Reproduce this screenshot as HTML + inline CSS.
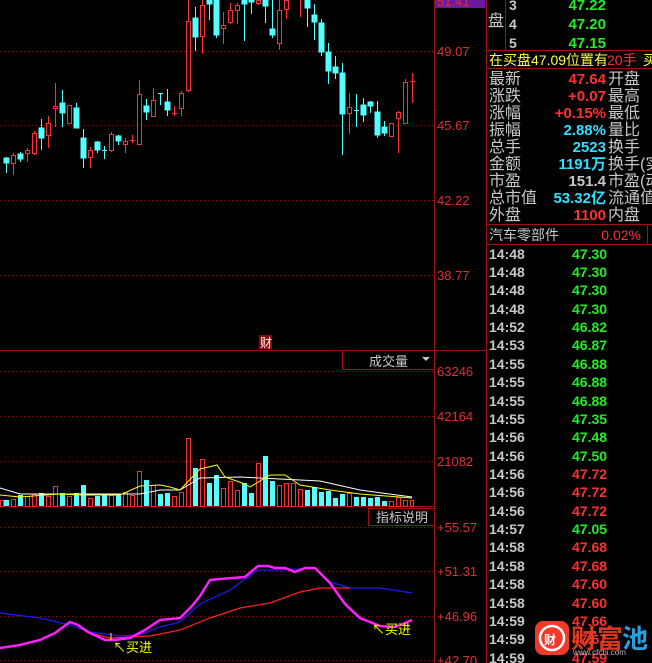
<!DOCTYPE html>
<html><head><meta charset="utf-8"><style>
html,body{margin:0;padding:0;background:#000;width:652px;height:663px;overflow:hidden}
svg{display:block}
text{font-family:"Liberation Sans","Noto Sans CJK SC",sans-serif}
.ax{fill:#e03030;font-size:13px}
.lb{fill:#c8c8c8;font-size:16px}
.v{font-size:15px;font-weight:bold;text-anchor:end}
.t{fill:#c8c8c8;font-size:14px;font-weight:bold}
.p{font-size:14px;font-weight:bold}
</style></head><body>
<svg width="652" height="663" viewBox="0 0 652 663" xmlns="http://www.w3.org/2000/svg">
<rect width="652" height="663" fill="#000"/>
<g stroke="#8a1010" stroke-dasharray="1,3" stroke-width="1">
<line x1="0" y1="51.5" x2="434" y2="51.5"/><line x1="0" y1="125.5" x2="434" y2="125.5"/>
<line x1="0" y1="200.5" x2="434" y2="200.5"/><line x1="0" y1="275.5" x2="434" y2="275.5"/>
<line x1="0" y1="371.5" x2="434" y2="371.5"/><line x1="0" y1="416.5" x2="434" y2="416.5"/>
<line x1="0" y1="461.5" x2="434" y2="461.5"/>
<line x1="0" y1="527.5" x2="434" y2="527.5"/><line x1="0" y1="571.5" x2="434" y2="571.5"/>
<line x1="0" y1="616.5" x2="434" y2="616.5"/><line x1="0" y1="660.5" x2="434" y2="660.5"/>
</g>
<g stroke="#a01010" stroke-width="1">
<line x1="434.5" y1="0" x2="434.5" y2="663"/>
<line x1="0" y1="350.5" x2="487" y2="350.5"/>
<line x1="0" y1="506.5" x2="434" y2="506.5"/>
<line x1="486.5" y1="0" x2="486.5" y2="663"/>
<line x1="505.5" y1="0" x2="505.5" y2="50"/>
<line x1="487" y1="50.5" x2="652" y2="50.5"/>
<line x1="487" y1="68.5" x2="652" y2="68.5"/>
<line x1="487" y1="224.5" x2="652" y2="224.5"/>
<line x1="487" y1="244.5" x2="652" y2="244.5"/>
<line x1="647.5" y1="224" x2="647.5" y2="244"/>
<line x1="434" y1="110.5" x2="437" y2="110.5"/>
</g>
<rect x="435" y="0" width="50" height="8" fill="#6a1aa0"/>
<text x="437" y="6" class="ax" fill="#c070ff">51.41</text>
<text x="437" y="56" class="ax">49.07</text>
<text x="437" y="130" class="ax">45.67</text>
<text x="437" y="205" class="ax">42.22</text>
<text x="437" y="280" class="ax">38.77</text>
<text x="437" y="376" class="ax">63246</text>
<text x="437" y="421" class="ax">42164</text>
<text x="437" y="466" class="ax">21082</text>
<text x="437" y="532" class="ax">+55.57</text>
<text x="437" y="576" class="ax">+51.31</text>
<text x="437" y="621" class="ax">+46.96</text>
<text x="437" y="665" class="ax">+42.70</text>
<rect x="259" y="335" width="13" height="14" fill="#8a0a0a"/>
<text x="260" y="347" fill="#fff" font-size="12">财</text>
<rect x="342.5" y="350.5" width="92" height="19" fill="none" stroke="#a01010"/>
<text x="369" y="366" fill="#c8c8c8" font-size="13">成交量</text>
<polygon points="422,357 430,357 426,361" fill="#c8c8c8"/>
<rect x="368.5" y="508.5" width="66" height="17" fill="none" stroke="#a01010"/>
<text x="376" y="522" fill="#c8c8c8" font-size="13">指标说明</text>
<!-- candles -->
<g stroke-width="1">
<g stroke="#54ffff" fill="#54ffff">
<line x1="6.5" y1="157" x2="6.5" y2="173"/><rect x="4" y="158" width="5" height="5"/>
<line x1="20.5" y1="152" x2="20.5" y2="162"/><rect x="18" y="154" width="5" height="5"/>
<line x1="41.5" y1="119" x2="41.5" y2="150"/><rect x="39" y="128" width="5" height="10"/>
<line x1="62.5" y1="90" x2="62.5" y2="127"/><rect x="60" y="103" width="5" height="10"/>
<line x1="76.5" y1="103" x2="76.5" y2="128"/><rect x="74" y="108" width="5" height="20"/>
<line x1="83.5" y1="129" x2="83.5" y2="168"/><rect x="81" y="138" width="5" height="20"/>
<line x1="97.5" y1="141" x2="97.5" y2="153"/><rect x="95" y="142" width="5" height="8"/>
<line x1="104.5" y1="146" x2="104.5" y2="159"/><line x1="102" y1="150.5" x2="107" y2="150.5"/>
<line x1="118.5" y1="135" x2="118.5" y2="145"/><rect x="116" y="136" width="5" height="5"/>
<line x1="146.5" y1="99" x2="146.5" y2="120"/><rect x="144" y="106" width="5" height="6"/>
<line x1="160.5" y1="93" x2="160.5" y2="105"/><line x1="158" y1="93.5" x2="163" y2="93.5"/>
<line x1="167.5" y1="89" x2="167.5" y2="116"/><rect x="165" y="102" width="5" height="8"/>
<line x1="195.5" y1="7" x2="195.5" y2="51"/><rect x="193" y="18" width="5" height="19"/>
<line x1="209.5" y1="0" x2="209.5" y2="20"/><rect x="207" y="0" width="5" height="4"/>
<line x1="216.5" y1="0" x2="216.5" y2="38"/><rect x="214" y="0" width="5" height="35"/>
<line x1="244.5" y1="0" x2="244.5" y2="41"/><rect x="242" y="0" width="5" height="4"/>
<line x1="251.5" y1="0" x2="251.5" y2="14"/><rect x="249" y="0" width="5" height="2"/>
<line x1="265.5" y1="0" x2="265.5" y2="23"/><rect x="263" y="0" width="5" height="6"/>
<line x1="272.5" y1="0" x2="272.5" y2="38"/><rect x="270" y="29" width="5" height="6"/>
<line x1="307.5" y1="0" x2="307.5" y2="27"/><rect x="305" y="0" width="5" height="8"/>
<line x1="314.5" y1="4" x2="314.5" y2="40"/><rect x="312" y="15" width="5" height="7"/>
<line x1="321.5" y1="19" x2="321.5" y2="56"/><rect x="319" y="23" width="5" height="29"/>
<line x1="328.5" y1="43" x2="328.5" y2="84"/><rect x="326" y="52" width="5" height="19"/>
<line x1="335.5" y1="56" x2="335.5" y2="79"/><rect x="333" y="67" width="5" height="6"/>
<line x1="342.5" y1="63" x2="342.5" y2="155"/><rect x="340" y="73" width="5" height="41"/>
<line x1="356.5" y1="94" x2="356.5" y2="127"/><line x1="354" y1="110.5" x2="359" y2="110.5"/>
<line x1="363.5" y1="98" x2="363.5" y2="122"/><rect x="361" y="105" width="5" height="10"/>
<line x1="370.5" y1="101" x2="370.5" y2="113"/><rect x="368" y="102" width="5" height="4"/>
<line x1="377.5" y1="101" x2="377.5" y2="138"/><rect x="375" y="112" width="5" height="23"/>
<line x1="384.5" y1="121" x2="384.5" y2="136"/><rect x="382" y="127" width="5" height="6"/>
</g>
<g stroke="#ff3030" fill="#000">
<line x1="13.5" y1="153" x2="13.5" y2="175"/><rect x="11.5" y="155.5" width="4" height="8"/>
<line x1="27.5" y1="148" x2="27.5" y2="162"/><rect x="25.5" y="150.5" width="4" height="3"/>
<line x1="34.5" y1="131" x2="34.5" y2="155"/><rect x="32.5" y="133.5" width="4" height="20"/>
<line x1="48.5" y1="116" x2="48.5" y2="148"/><rect x="46.5" y="123.5" width="4" height="12"/>
<line x1="55.5" y1="83" x2="55.5" y2="127"/><rect x="53.5" y="106.5" width="4" height="2"/>
<rect x="67.5" y="105.5" width="4" height="18"/>
<line x1="90.5" y1="147" x2="90.5" y2="168"/><rect x="88.5" y="150.5" width="4" height="7"/>
<line x1="111.5" y1="132" x2="111.5" y2="152"/><rect x="109.5" y="134.5" width="4" height="16"/>
<line x1="125.5" y1="138" x2="125.5" y2="153"/><rect x="123.5" y="141.5" width="4" height="3"/>
<line x1="132.5" y1="135" x2="132.5" y2="143"/><line x1="130" y1="140.5" x2="135" y2="140.5"/>
<line x1="139.5" y1="80" x2="139.5" y2="145"/><rect x="137.5" y="94.5" width="4" height="50"/>
<line x1="153.5" y1="88" x2="153.5" y2="117"/><rect x="151.5" y="100.5" width="4" height="16"/>
<line x1="174.5" y1="106" x2="174.5" y2="116"/><line x1="172" y1="113.5" x2="177" y2="113.5"/>
<line x1="181.5" y1="91" x2="181.5" y2="116"/><rect x="179.5" y="93.5" width="4" height="15"/>
<line x1="188.5" y1="0" x2="188.5" y2="92"/><rect x="186.5" y="21.5" width="4" height="69"/>
<line x1="202.5" y1="0" x2="202.5" y2="54"/><rect x="200.5" y="5.5" width="4" height="31"/>
<line x1="223.5" y1="12" x2="223.5" y2="44"/><rect x="221.5" y="25.5" width="4" height="3"/>
<line x1="230.5" y1="3" x2="230.5" y2="24"/><rect x="228.5" y="10.5" width="4" height="12"/>
<line x1="237.5" y1="3" x2="237.5" y2="24"/><rect x="235.5" y="5.5" width="4" height="5"/>
<line x1="258.5" y1="0" x2="258.5" y2="5"/><rect x="256.5" y="0.5" width="4" height="3"/>
<line x1="279.5" y1="0" x2="279.5" y2="50"/><rect x="277.5" y="10.5" width="4" height="33"/>
<line x1="286.5" y1="0" x2="286.5" y2="19"/><rect x="284.5" y="0.5" width="4" height="9"/>
<line x1="300.5" y1="0" x2="300.5" y2="17"/>
<line x1="349.5" y1="93" x2="349.5" y2="134"/><rect x="347.5" y="107.5" width="4" height="6"/>
<rect x="389.5" y="123.5" width="4" height="13"/>
<line x1="398.5" y1="111" x2="398.5" y2="153"/><rect x="396.5" y="112.5" width="4" height="6"/>
<line x1="405.5" y1="79" x2="405.5" y2="124"/><rect x="403.5" y="82.5" width="4" height="41"/>
<line x1="412.5" y1="73" x2="412.5" y2="103"/><line x1="410" y1="81.5" x2="415" y2="81.5"/>
</g>
</g>
<!-- volume -->
<g fill="#54ffff">
<rect x="4" y="500" width="5" height="6"/><rect x="18" y="495" width="5" height="11"/><rect x="39" y="493" width="5" height="13"/>
<rect x="60" y="493" width="5" height="13"/><rect x="74" y="493" width="5" height="13"/><rect x="81" y="485" width="5" height="21"/>
<rect x="95" y="496" width="5" height="10"/><rect x="102" y="495" width="5" height="11"/><rect x="116" y="495" width="5" height="11"/>
<rect x="144" y="480" width="5" height="26"/><rect x="158" y="494" width="5" height="12"/><rect x="165" y="493" width="5" height="13"/>
<rect x="193" y="468" width="5" height="38"/><rect x="207" y="483" width="5" height="23"/><rect x="214" y="475" width="5" height="31"/>
<rect x="242" y="483" width="5" height="23"/><rect x="249" y="493" width="5" height="13"/><rect x="263" y="456" width="5" height="50"/>
<rect x="270" y="481" width="5" height="25"/><rect x="305" y="490" width="5" height="16"/><rect x="312" y="487" width="5" height="19"/>
<rect x="319" y="492" width="5" height="14"/><rect x="326" y="491" width="5" height="15"/><rect x="333" y="498" width="5" height="8"/>
<rect x="340" y="494" width="5" height="12"/><rect x="354" y="497" width="5" height="9"/><rect x="361" y="497" width="5" height="9"/>
<rect x="368" y="498" width="5" height="8"/><rect x="375" y="497" width="5" height="9"/><rect x="382" y="501" width="5" height="5"/>
</g>
<g fill="none" stroke="#ff3030">
<rect x="0.5" y="500.5" width="3" height="6"/><rect x="11.5" y="499.5" width="4" height="7"/><rect x="25.5" y="496.5" width="4" height="10"/>
<rect x="32.5" y="494.5" width="4" height="12"/><rect x="46.5" y="496.5" width="4" height="10"/><rect x="53.5" y="486.5" width="4" height="20"/>
<rect x="67.5" y="496.5" width="4" height="10"/><rect x="88.5" y="498.5" width="4" height="8"/><rect x="109.5" y="495.5" width="4" height="11"/>
<rect x="123.5" y="492.5" width="4" height="14"/><rect x="130.5" y="495.5" width="4" height="11"/><rect x="137.5" y="471.5" width="4" height="35"/>
<rect x="151.5" y="485.5" width="4" height="21"/><rect x="172.5" y="496.5" width="4" height="10"/><rect x="179.5" y="492.5" width="4" height="14"/>
<rect x="186.5" y="438.5" width="4" height="68"/><rect x="200.5" y="459.5" width="4" height="47"/><rect x="221.5" y="488.5" width="4" height="18"/>
<rect x="228.5" y="481.5" width="4" height="25"/><rect x="235.5" y="490.5" width="4" height="16"/><rect x="256.5" y="463.5" width="4" height="43"/>
<rect x="277.5" y="485.5" width="4" height="21"/><rect x="284.5" y="483.5" width="4" height="23"/><rect x="291.5" y="483.5" width="4" height="23"/>
<rect x="298.5" y="489.5" width="4" height="17"/><rect x="347.5" y="493.5" width="4" height="13"/><rect x="389.5" y="501.5" width="4" height="5"/>
<rect x="396.5" y="497.5" width="4" height="9"/><rect x="403.5" y="500.5" width="4" height="6"/><rect x="410.5" y="500.5" width="3" height="6"/>
</g>
<polyline fill="none" stroke="#fff" stroke-width="1" points="0,488 20,494 80,494 140,494 160,490 180,490 200,478 240,477 280,479 320,481 360,490 412,497"/>
<polyline fill="none" stroke="#ffff00" stroke-width="1" points="0,495 20,497 60,494 80,495 120,495 140,486 160,485 170,487 180,490 200,469 217,465 225,477 245,484 250,487 270,475 285,475 300,485 330,490 360,494 412,498"/>
<!-- indicator -->
<polyline fill="none" stroke="#1a1aff" stroke-width="1.2" points="0,613 40,618 70,625 90,632 120,636 140,635 160,627 180,622 200,604 230,590 258,570 280,570 300,569 315,568 330,582 350,588 380,588 412,593"/>
<polyline fill="none" stroke="#ff2020" stroke-width="1.2" points="90,633 110,638 150,636 180,630 210,618 240,608 270,603 300,592 320,588 335,588 350,588"/>
<polyline fill="none" stroke="#ff20ff" stroke-width="2.5" points="0,648 20,645 40,640 55,633 70,622 78,625 88,632 105,640 115,640 130,638 145,630 160,620 180,618 192,606 200,596 210,580 220,579 245,577 258,566 268,566 275,568 285,568 295,572 305,568 315,568 330,583 345,604 360,618 380,626 395,627 405,623 412,620"/>
<text x="113" y="652" fill="#ffff00" font-size="13">↖买进</text>
<text x="372" y="634" fill="#ffff00" font-size="13">↖买进</text>
<line x1="111" y1="633" x2="111" y2="640" stroke="#ffff00"/>
<!-- right panel -->
<text x="488" y="26" class="lb">盘</text>
<text x="509" y="10" fill="#c8c8c8" font-size="14" font-weight="bold">3</text>
<text x="509" y="29" fill="#c8c8c8" font-size="14" font-weight="bold">4</text>
<text x="509" y="48" fill="#c8c8c8" font-size="14" font-weight="bold">5</text>
<text x="606" y="10" class="v" fill="#22ee22">47.22</text>
<text x="606" y="29" class="v" fill="#22ee22">47.20</text>
<text x="606" y="48" class="v" fill="#22ee22">47.15</text>
<text x="489" y="65" fill="#ffff40" font-size="14">在买盘47.09位置有</text>
<text x="607" y="65" fill="#ff3030" font-size="14">20手</text>
<text x="643" y="65" fill="#ffff40" font-size="14">买</text>
<g class="lb">
<text x="489" y="84" class="lb">最新</text><text x="489" y="101" class="lb">涨跌</text><text x="489" y="118" class="lb">涨幅</text>
<text x="489" y="135" class="lb">振幅</text><text x="489" y="152" class="lb">总手</text><text x="489" y="169" class="lb">金额</text>
<text x="489" y="186" class="lb">市盈</text><text x="489" y="203" class="lb">总市值</text><text x="489" y="220" class="lb">外盘</text>
<text x="608" y="84" class="lb">开盘</text><text x="608" y="101" class="lb">最高</text><text x="608" y="118" class="lb">最低</text>
<text x="608" y="135" class="lb">量比</text><text x="608" y="152" class="lb">换手</text><text x="608" y="169" class="lb">换手(实</text>
<text x="608" y="186" class="lb">市盈(动</text><text x="608" y="203" class="lb">流通值</text><text x="608" y="220" class="lb">内盘</text>
</g>
<text x="606" y="84" class="v" fill="#ff3030">47.64</text>
<text x="606" y="101" class="v" fill="#ff3030">+0.07</text>
<text x="606" y="118" class="v" fill="#ff3030">+0.15%</text>
<text x="606" y="135" class="v" fill="#30e0ff">2.88%</text>
<text x="606" y="152" class="v" fill="#30e0ff">2523</text>
<text x="606" y="169" class="v" fill="#30e0ff">1191万</text>
<text x="606" y="186" class="v" fill="#c8c8c8">151.4</text>
<text x="606" y="203" class="v" fill="#30e0ff">53.32亿</text>
<text x="606" y="220" class="v" fill="#ff3030">1100</text>
<text x="489" y="240" fill="#c8c8c8" font-size="14">汽车零部件</text>
<text x="641" y="240" fill="#ff3030" font-size="14" text-anchor="end">0.02%</text>
<g>
<text x="489" y="259" class="t">14:48</text><text x="572" y="259" class="p" fill="#22ee22">47.30</text>
<text x="489" y="277" class="t">14:48</text><text x="572" y="277" class="p" fill="#22ee22">47.30</text>
<text x="489" y="295" class="t">14:48</text><text x="572" y="295" class="p" fill="#22ee22">47.30</text>
<text x="489" y="314" class="t">14:48</text><text x="572" y="314" class="p" fill="#22ee22">47.30</text>
<text x="489" y="332" class="t">14:52</text><text x="572" y="332" class="p" fill="#22ee22">46.82</text>
<text x="489" y="350" class="t">14:53</text><text x="572" y="350" class="p" fill="#22ee22">46.87</text>
<text x="489" y="369" class="t">14:55</text><text x="572" y="369" class="p" fill="#22ee22">46.88</text>
<text x="489" y="387" class="t">14:55</text><text x="572" y="387" class="p" fill="#22ee22">46.88</text>
<text x="489" y="406" class="t">14:55</text><text x="572" y="406" class="p" fill="#22ee22">46.88</text>
<text x="489" y="424" class="t">14:55</text><text x="572" y="424" class="p" fill="#22ee22">47.35</text>
<text x="489" y="442" class="t">14:56</text><text x="572" y="442" class="p" fill="#22ee22">47.48</text>
<text x="489" y="461" class="t">14:56</text><text x="572" y="461" class="p" fill="#22ee22">47.50</text>
<text x="489" y="479" class="t">14:56</text><text x="572" y="479" class="p" fill="#ff3030">47.72</text>
<text x="489" y="497" class="t">14:56</text><text x="572" y="497" class="p" fill="#ff3030">47.72</text>
<text x="489" y="516" class="t">14:56</text><text x="572" y="516" class="p" fill="#ff3030">47.72</text>
<text x="489" y="534" class="t">14:57</text><text x="572" y="534" class="p" fill="#22ee22">47.05</text>
<text x="489" y="552" class="t">14:58</text><text x="572" y="552" class="p" fill="#ff3030">47.68</text>
<text x="489" y="571" class="t">14:58</text><text x="572" y="571" class="p" fill="#ff3030">47.68</text>
<text x="489" y="589" class="t">14:58</text><text x="572" y="589" class="p" fill="#ff3030">47.60</text>
<text x="489" y="608" class="t">14:58</text><text x="572" y="608" class="p" fill="#ff3030">47.60</text>
<text x="489" y="626" class="t">14:59</text><text x="572" y="626" class="p" fill="#ff3030">47.66</text>
<text x="489" y="644" class="t">14:59</text><text x="572" y="644" class="p" fill="#ff3030">47.67</text>
<text x="489" y="663" class="t">14:59</text><text x="572" y="663" class="p" fill="#ff3030">47.59</text>
</g>
<line x1="486.5" y1="350" x2="486.5" y2="510" stroke="#a01010"/>
<!-- logo -->
<rect x="535" y="621" width="34" height="34" rx="8" fill="#ee3a2a"/>
<circle cx="552" cy="638" r="12" fill="none" stroke="#fff" stroke-width="2.5"/>
<text x="544" y="644" fill="#fff" font-size="12" font-weight="bold">财</text>
<text x="571" y="648" fill="#f04020" font-size="26" font-weight="bold" opacity="0.9">财富</text>
<text x="622" y="648" fill="#2aa0e0" font-size="26" font-weight="bold">池</text>
<text x="573" y="655" fill="#bbbbbb" font-size="8">www.cfchi.com</text>
</svg>
</body></html>
